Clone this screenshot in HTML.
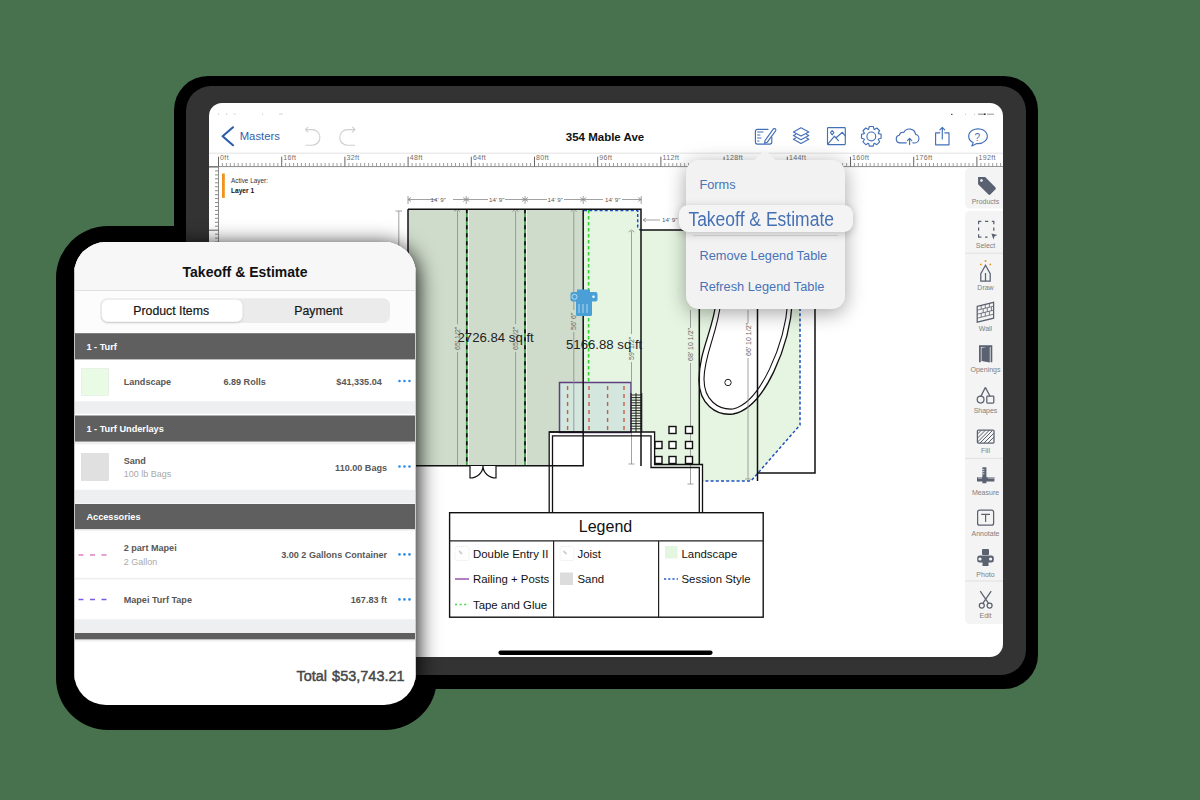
<!DOCTYPE html>
<html><head><meta charset="utf-8">
<style>
*{margin:0;padding:0;box-sizing:border-box}
html,body{width:1200px;height:800px;overflow:hidden;background:#48724e;font-family:"Liberation Sans",sans-serif}
.abs{position:absolute}
#pshadow{left:56px;top:226px;width:381px;height:504px;border-radius:52px;background:#000}
#ishadow{left:174px;top:76px;width:864px;height:613px;border-radius:34px;background:#000}
#bezel{left:186px;top:86px;width:840px;height:589px;border-radius:25px;background:#333}
#screen{left:209px;top:103px;width:794px;height:554px;border-radius:13px;background:#fff;overflow:hidden}
#screen svg{position:absolute;left:0;top:0}
#softclip{left:186px;top:86px;width:840px;height:589px;border-radius:25px;overflow:hidden}
#softcast{left:-112.1px;top:156px;width:341.7px;height:462.5px;border-radius:32px;box-shadow:1px 4.5px 22px 0 rgba(0,0,0,1)}
#phone{left:73.9px;top:242px;width:341.7px;height:462.5px;border-radius:32px;background:#fff;overflow:hidden}
#pin{position:absolute;left:-73.9px;top:-242px;width:1200px;height:800px}
#pin div{position:absolute}
.t{position:absolute;white-space:nowrap;line-height:1}
</style></head>
<body>
<div id="pshadow" class="abs"></div>
<div id="ishadow" class="abs"></div>
<div id="bezel" class="abs"></div>
<div id="screen" class="abs">
<svg width="794" height="554" viewBox="209 103 794 554" font-family="Liberation Sans">
<!-- status bar specks -->
<g fill="#bdbdbd"><rect x="218" y="113.6" width="1" height="1"/><rect x="226" y="113.6" width="1.2" height="1"/><rect x="233" y="113.6" width="3" height="1" opacity=".5"/><rect x="262" y="113.6" width="1" height="1"/><rect x="279" y="113.6" width="4" height="1" opacity=".6"/><rect x="951" y="113.8" width="1.5" height="1.2" fill="#555"/><rect x="965" y="113.8" width="1" height="1"/><rect x="974" y="113.8" width="1" height="1"/><rect x="978" y="113.6" width="6" height="1.2" fill="#999"/><rect x="984" y="113.4" width="1.6" height="1.6" fill="#333"/><rect x="987" y="113.6" width="7" height="1.2" fill="#aaa"/></g>
<!-- nav -->
<path d="M233 127.3L222.6 136.3L233 145.2" stroke="#2d5ba9" stroke-width="2.1" fill="none" stroke-linecap="round" stroke-linejoin="round"/>
<text x="239.7" y="140" font-size="11.3" fill="#3560ab">Masters</text>
<g stroke="#cfcfcf" stroke-width="1.1" fill="none">
<path d="M305.5 129.6H312.1A7.85 7.85 0 0 1 312.1 145.3H305.5M308.2 126.9L305.5 129.6L308.2 132.3"/>
<path d="M355 129.6H347.6A7.85 7.85 0 0 0 347.6 145.3H355M352.3 126.9L355 129.6L352.3 132.3"/>
</g>
<text x="565.8" y="140.5" font-size="11.5" font-weight="bold" fill="#111">354 Mable Ave</text>
<!-- toolbar icons -->
<g stroke="#4470b6" stroke-width="1.15" fill="none" stroke-linejoin="round" stroke-linecap="round">
<path d="M768 129.4H757.4A2 2 0 0 0 755.4 131.4V142.1A2 2 0 0 0 757.4 144.1H769.8A2 2 0 0 0 771.8 142.1V137"/>
<path d="M765 140.6L773.2 129.2A1.3 1.3 0 0 1 775.6 130.8L767.3 142.2L764.6 143.3Z"/>
<path d="M757.6 132H763M757.6 135H760M757.6 138H761M757.6 141H759" stroke-width="1"/>
<path d="M793.4 131.9L801 127.8L808.8 131.9L801 136Z"/>
<path d="M795.6 134.4L793.4 135.6L801 139.7L808.8 135.6L806.6 134.4"/>
<path d="M795.6 138.1L793.4 139.3L801 143.4L808.8 139.3L806.6 138.1"/>
<rect x="827.5" y="127.6" width="17.8" height="17" rx="0.8"/>
<path d="M827.8 144.2L834.5 136.2L838.4 140.6M835.8 138L842.4 132.3L845.2 136"/>
<path d="M832.2 130.6L833.9 132.6L832.2 134.8L830.5 132.6Z"/>
<path d="M868.62 129.19L869.31 126.50L873.29 126.50L873.98 129.19L874.44 129.38L876.83 127.97L879.63 130.77L878.22 133.16L878.41 133.62L881.10 134.31L881.10 138.29L878.41 138.98L878.22 139.44L879.63 141.83L876.83 144.63L874.44 143.22L873.98 143.41L873.29 146.10L869.31 146.10L868.62 143.41L868.16 143.22L865.77 144.63L862.97 141.83L864.38 139.44L864.19 138.98L861.50 138.29L861.50 134.31L864.19 133.62L864.38 133.16L862.97 130.77L865.77 127.97L868.16 129.38Z" stroke-linejoin="round"/>
<circle cx="871.3" cy="136.4" r="4.4"/>
<path d="M906.2 142.8H900A3.8 3.8 0 0 1 899.2 135.3A4 4 0 0 1 903.8 132.4A6.3 6.3 0 0 1 915.6 134.4A4.3 4.3 0 0 1 913.6 142.8H912.9"/>
<path d="M909.6 144.6V138.6M907.4 140.6L909.6 138.4L911.8 140.6"/>
<path d="M939.8 132.8H935.6V144.8H949V132.8H944.8"/>
<path d="M942.3 139V127.5M939.9 129.8L942.3 127.4L944.7 129.8"/>
<path d="M973.2 142.6A9.3 7.4 0 1 1 976.8 143.6L971.8 146Z"/>
</g>
<text x="974.6" y="140.6" font-size="10" fill="#4470b6">?</text>
<!-- ruler -->
<path d="M209 153.2H1003" stroke="#e2e2e2" stroke-width="1"/>
<path d="M209 166.6H1003M218.5 166V657" stroke="#8c8c8c" stroke-width="1"/>
<path d="M222.4 163V166.5M226.4 163V166.5M230.3 163V166.5M234.3 163V166.5M238.2 163V166.5M242.2 163V166.5M246.2 163V166.5M250.1 163V166.5M254.1 163V166.5M258.0 163V166.5M261.9 163V166.5M265.9 163V166.5M269.9 163V166.5M273.8 163V166.5M277.8 163V166.5M285.6 163V166.5M289.6 163V166.5M293.6 163V166.5M297.5 163V166.5M301.4 163V166.5M305.4 163V166.5M309.4 163V166.5M313.3 163V166.5M317.2 163V166.5M321.2 163V166.5M325.1 163V166.5M329.1 163V166.5M333.1 163V166.5M337.0 163V166.5M340.9 163V166.5M348.9 163V166.5M352.8 163V166.5M356.8 163V166.5M360.7 163V166.5M364.6 163V166.5M368.6 163V166.5M372.6 163V166.5M376.5 163V166.5M380.5 163V166.5M384.4 163V166.5M388.4 163V166.5M392.3 163V166.5M396.2 163V166.5M400.2 163V166.5M404.1 163V166.5M412.1 163V166.5M416.0 163V166.5M420.0 163V166.5M423.9 163V166.5M427.9 163V166.5M431.8 163V166.5M435.8 163V166.5M439.7 163V166.5M443.6 163V166.5M447.6 163V166.5M451.6 163V166.5M455.5 163V166.5M459.5 163V166.5M463.4 163V166.5M467.4 163V166.5M475.2 163V166.5M479.2 163V166.5M483.2 163V166.5M487.1 163V166.5M491.1 163V166.5M495.0 163V166.5M498.9 163V166.5M502.9 163V166.5M506.9 163V166.5M510.8 163V166.5M514.8 163V166.5M518.7 163V166.5M522.7 163V166.5M526.6 163V166.5M530.5 163V166.5M538.5 163V166.5M542.4 163V166.5M546.4 163V166.5M550.3 163V166.5M554.2 163V166.5M558.2 163V166.5M562.2 163V166.5M566.1 163V166.5M570.0 163V166.5M574.0 163V166.5M578.0 163V166.5M581.9 163V166.5M585.9 163V166.5M589.8 163V166.5M593.8 163V166.5M601.7 163V166.5M605.6 163V166.5M609.5 163V166.5M613.5 163V166.5M617.5 163V166.5M621.4 163V166.5M625.4 163V166.5M629.3 163V166.5M633.2 163V166.5M637.2 163V166.5M641.2 163V166.5M645.1 163V166.5M649.0 163V166.5M653.0 163V166.5M657.0 163V166.5M664.9 163V166.5M668.8 163V166.5M672.8 163V166.5M676.7 163V166.5M680.7 163V166.5M684.6 163V166.5M688.5 163V166.5M692.5 163V166.5M696.5 163V166.5M700.4 163V166.5M704.4 163V166.5M708.3 163V166.5M712.2 163V166.5M716.2 163V166.5M720.2 163V166.5M728.0 163V166.5M732.0 163V166.5M736.0 163V166.5M739.9 163V166.5M743.9 163V166.5M747.8 163V166.5M751.8 163V166.5M755.7 163V166.5M759.6 163V166.5M763.6 163V166.5M767.6 163V166.5M771.5 163V166.5M775.5 163V166.5M779.4 163V166.5M783.4 163V166.5M791.2 163V166.5M795.2 163V166.5M799.1 163V166.5M803.1 163V166.5M807.1 163V166.5M811.0 163V166.5M815.0 163V166.5M818.9 163V166.5M822.9 163V166.5M826.8 163V166.5M830.8 163V166.5M834.7 163V166.5M838.6 163V166.5M842.6 163V166.5M846.6 163V166.5M854.5 163V166.5M858.4 163V166.5M862.4 163V166.5M866.3 163V166.5M870.2 163V166.5M874.2 163V166.5M878.1 163V166.5M882.1 163V166.5M886.1 163V166.5M890.0 163V166.5M894.0 163V166.5M897.9 163V166.5M901.9 163V166.5M905.8 163V166.5M909.8 163V166.5M917.6 163V166.5M921.6 163V166.5M925.6 163V166.5M929.5 163V166.5M933.5 163V166.5M937.4 163V166.5M941.4 163V166.5M945.3 163V166.5M949.2 163V166.5M953.2 163V166.5M957.1 163V166.5M961.1 163V166.5M965.1 163V166.5M969.0 163V166.5M973.0 163V166.5M980.9 163V166.5M984.8 163V166.5M988.8 163V166.5M992.7 163V166.5M996.7 163V166.5M1000.6 163V166.5" stroke="#8f8f8f" stroke-width=".85" fill="none"/><path d="M215 170.9H218.5M215 174.9H218.5M215 178.8H218.5M215 182.8H218.5M215 186.8H218.5M215 190.7H218.5M215 194.7H218.5M215 198.6H218.5M215 202.6H218.5M215 206.5H218.5M215 210.4H218.5M215 214.4H218.5M215 218.3H218.5M215 222.3H218.5M215 226.2H218.5M215 234.2H218.5M215 238.1H218.5M215 242.1H218.5M215 246.0H218.5M215 249.9H218.5M215 253.9H218.5M215 257.9H218.5M215 261.8H218.5M215 265.8H218.5M215 269.7H218.5M215 273.6H218.5M215 277.6H218.5M215 281.6H218.5M215 285.5H218.5M215 289.4H218.5M215 297.4H218.5M215 301.3H218.5M215 305.2H218.5M215 309.2H218.5M215 313.1H218.5M215 317.1H218.5M215 321.1H218.5M215 325.0H218.5M215 329.0H218.5M215 332.9H218.5M215 336.9H218.5M215 340.8H218.5M215 344.8H218.5M215 348.7H218.5M215 352.6H218.5M215 360.6H218.5M215 364.5H218.5M215 368.5H218.5M215 372.4H218.5M215 376.4H218.5M215 380.3H218.5M215 384.2H218.5M215 388.2H218.5M215 392.1H218.5M215 396.1H218.5M215 400.1H218.5M215 404.0H218.5M215 408.0H218.5M215 411.9H218.5M215 415.9H218.5M215 423.8H218.5M215 427.7H218.5M215 431.7H218.5M215 435.6H218.5M215 439.6H218.5M215 443.5H218.5M215 447.4H218.5M215 451.4H218.5M215 455.4H218.5M215 459.3H218.5M215 463.2H218.5M215 467.2H218.5M215 471.2H218.5M215 475.1H218.5M215 479.1H218.5M215 486.9H218.5M215 490.9H218.5M215 494.9H218.5M215 498.8H218.5M215 502.8H218.5M215 506.7H218.5M215 510.7H218.5M215 514.6H218.5M215 518.5H218.5M215 522.5H218.5M215 526.5H218.5M215 530.4H218.5M215 534.4H218.5M215 538.3H218.5M215 542.2H218.5M215 550.2H218.5M215 554.1H218.5M215 558.0H218.5M215 562.0H218.5M215 566.0H218.5M215 569.9H218.5M215 573.9H218.5M215 577.8H218.5M215 581.8H218.5M215 585.7H218.5M215 589.7H218.5M215 593.6H218.5M215 597.5H218.5M215 601.5H218.5M215 605.5H218.5M215 613.4H218.5M215 617.3H218.5M215 621.2H218.5M215 625.2H218.5M215 629.2H218.5M215 633.1H218.5M215 637.0H218.5M215 641.0H218.5M215 645.0H218.5M215 648.9H218.5M215 652.9H218.5M215 656.8H218.5" stroke="#8a8a8a" stroke-width="1" fill="none"/>
<path d="M218.5 156.7V166.5M281.7 156.7V166.5M344.9 156.7V166.5M408.1 156.7V166.5M471.3 156.7V166.5M534.5 156.7V166.5M597.7 156.7V166.5M660.9 156.7V166.5M724.1 156.7V166.5M787.3 156.7V166.5M850.5 156.7V166.5M913.7 156.7V166.5M976.9 156.7V166.5M209 167.0H218.5M209 230.2H218.5M209 293.4H218.5M209 356.6H218.5M209 419.8H218.5M209 483.0H218.5M209 546.2H218.5M209 609.4H218.5" stroke="#666" stroke-width="1" fill="none"/>
<g font-size="7" letter-spacing=".35" fill="#707070"><text x="220.1" y="160.4">0ft</text><text x="283.3" y="160.4">16ft</text><text x="346.5" y="160.4">32ft</text><text x="409.7" y="160.4">48ft</text><text x="472.9" y="160.4">64ft</text><text x="536.1" y="160.4">80ft</text><text x="599.3" y="160.4">96ft</text><text x="662.5" y="160.4">112ft</text><text x="725.7" y="160.4">128ft</text><text x="788.9" y="160.4">144ft</text><text x="852.1" y="160.4">160ft</text><text x="915.3" y="160.4">176ft</text><text x="978.5" y="160.4">192ft</text></g>

<!-- active layer -->
<rect x="222" y="173.5" width="2.8" height="24.4" fill="#f0931c"/>
<text x="231" y="183" font-size="6.4" fill="#333">Active Layer:</text>
<text x="231" y="192.8" font-size="6.6" font-weight="bold" fill="#111">Layer 1</text>
<!-- fills -->
<path d="M408 209.3H583.2V432H549.2V465.7H408Z" fill="#cfdccb"/>
<path d="M583.2 209.3H641V230H800V425L751 481H702V466H654.6V432H583.2Z" fill="#e6f5e2"/>
<rect x="559.5" y="382.5" width="71.5" height="50" fill="#d3e7de" stroke="#5e3d80" stroke-width="1.5"/>
<!-- tub -->
<path d="M716.5 300C713 330 699 352 699 380C699 404 716 416 733 414C765 408 790 345 792.5 300Z" fill="#fff" stroke="#111" stroke-width="1.3"/>
<path d="M721 300C718 333 704 354 704 379C704 400 718 410 733 409C760 403 785 345 788 300" fill="none" stroke="#111" stroke-width="1.1"/>
<circle cx="728" cy="382.5" r="3.2" fill="#fff" stroke="#222" stroke-width="1"/>
<!-- gray dims -->
<g stroke="#8a8a8a" stroke-width=".8" fill="none">
<path d="M408 199.5H436M453 199.5H466.2M466.3 199.5H488M505 199.5H525M525 199.5H547M564 199.5H583.2M583.2 199.5H603M622 199.5H641.2"/>
<path d="M408 196V204M466.2 196V204M525 196V204M583.2 196V204M641.2 196V204"/>
<path d="M411 197.5L408 199.5L411 201.5M463.2 197.5L466.2 199.5L463.2 201.5M469.2 197.5L466.2 199.5L469.2 201.5M522 197.5L525 199.5L522 201.5M528 197.5L525 199.5L528 201.5M580.2 197.5L583.2 199.5L580.2 201.5M586.2 197.5L583.2 199.5L586.2 201.5M638.2 197.5L641.2 199.5L638.2 201.5"/>
<path d="M398.8 211V466M457.5 211V324M457.5 352V465M515.6 211V324M515.6 352V465M573.8 211V310M573.8 332V432M631.5 231V334M631.5 362V464M690.5 310V328M690.5 363V484M748 310V323M748 358V479"/>
<path d="M395.5 211H402M454 211.5L457 209.5L460 211.5M512.5 211.5L515.5 209.5L518.5 211.5M570.8 211.5L573.8 209.5L576.8 211.5M628.5 232L631.5 230L634.5 232M628.5 464H634.5M687.5 484H693.5M745 479H751"/>
<path d="M643 220H660M646 218L643 220L646 222"/>
</g>
<g font-size="6.2" fill="#555">
<text x="430.5" y="201.7">14' 9"</text><text x="489" y="201.7">14' 9"</text><text x="547.5" y="201.7">14' 9"</text><text x="605" y="201.7">14' 9"</text>
<text x="662" y="222.2">14' 9"</text>
</g>
<g font-size="7" fill="#666">
<text transform="translate(459.8 350) rotate(-90)">65' 1/2"</text>
<text transform="translate(518 350) rotate(-90)">65' 1/2"</text>
<text transform="translate(576.3 330) rotate(-90)">56' 6"</text>
<text transform="translate(634 360) rotate(-90)">59' 1/2"</text>
<text transform="translate(693 361) rotate(-90)">68' 10 1/2"</text>
<text transform="translate(750.5 356) rotate(-90)">66' 10 1/2"</text>
</g>
<!-- dashed lines -->
<path d="M468.3 209.3V465.7M526.5 209.3V465.7" stroke="#fff" stroke-width="1" opacity=".8"/>
<path d="M466.8 209.3V465.7M525 209.3V465.7" stroke="#3a9a3a" stroke-width="1.7"/>
<path d="M466.8 209.3V465.7M525 209.3V465.7" stroke="#111" stroke-width="1.7" stroke-dasharray="4 4"/>
<path d="M588.6 210V382" stroke="#35d335" stroke-width="1.6" stroke-dasharray="3.5 2.5"/>
<path d="M567.6 386V431M589 386V431M607.6 386V431M624 386V431" stroke="#c95a48" stroke-width="1.4" stroke-dasharray="4 4"/>
<path d="M584 210.6H637.7V226A3.5 3.5 0 0 0 641 230" stroke="#1f4fc0" stroke-width="1.5" stroke-dasharray="3 2.2" fill="none"/>
<path d="M800 308V425L751 481H702" stroke="#1f4fc0" stroke-width="1.5" stroke-dasharray="3 2.2" fill="none"/>
<!-- black walls -->
<g stroke="#111" stroke-width="1.5" fill="none">
<path d="M408 209.3H641V466M408 209.3V465.7H583.2V209.3"/>
<path d="M641 230H815V473H757.5V481M699.3 300V464.5M757.5 300V473"/>
<path d="M549.2 512.5V432H654.6V464.5H702.5V512.5M552.5 512.5V435.8H651V467.5H699.3V512.5" stroke-width="1.3"/>
<path d="M549.2 432H583.2"/>
</g>
<!-- door -->
<path d="M470 466V478A13 12 0 0 0 483 466M496 466V478A13 12 0 0 1 483 466" stroke="#111" stroke-width="1.2" fill="#fff"/>
<!-- stairs -->
<g stroke="#111" stroke-width=".9">
<path d="M631 393V432M636 393V432M641.8 393V432"/>
<path d="M631 395H641.8M631 397.6H641.8M631 400.2H641.8M631 402.8H641.8M631 405.4H641.8M631 408H641.8M631 410.6H641.8M631 413.2H641.8M631 415.8H641.8M631 418.4H641.8M631 421H641.8M631 423.6H641.8M631 426.2H641.8M631 428.8H641.8"/>
</g>
<!-- squares -->
<g fill="#fff" stroke="#111" stroke-width="1.4">
<rect x="669" y="426.5" width="7" height="7"/><rect x="685.5" y="426.5" width="7" height="7"/>
<rect x="655" y="441.5" width="7" height="7"/><rect x="669" y="441.5" width="7" height="7"/><rect x="685.5" y="441.5" width="7" height="7"/>
<rect x="655" y="456.5" width="7" height="7"/><rect x="669" y="456.5" width="7" height="7"/><rect x="685.5" y="456.5" width="7" height="7"/>
</g>
<!-- area labels -->
<g font-size="13.2" fill="#222">
<text x="457.5" y="341.8">2726.84 sq ft</text>
<text x="566" y="349.4">5166.88 sq ft</text>
</g>
<!-- device icon -->
<g fill="#4aa0d6">
<rect x="570.5" y="292" width="27" height="9.5" rx="2"/>
<rect x="577" y="289.5" width="13" height="4"/>
<rect x="576" y="300" width="16" height="16" rx="1.5"/>
</g>
<g fill="none" stroke="#cfe6f4" stroke-width=".8"><circle cx="574.5" cy="296.8" r="2.5"/><path d="M579 304V313M583 304V313M587 304V313"/></g>
<circle cx="593.5" cy="296.8" r="1.2" fill="#fff"/>
<!-- legend -->
<rect x="449.6" y="512.7" width="313.6" height="104.5" fill="#fff" stroke="#111" stroke-width="1.4"/>
<path d="M449.6 540.8H763.2M553.6 540.8V617.2M658.6 540.8V617.2" stroke="#222" stroke-width="1.2"/>
<text x="578.8" y="532" font-size="16" fill="#111">Legend</text>
<g font-size="11.4" fill="#111">
<text x="473" y="558">Double Entry II</text>
<text x="473" y="583.4">Railing + Posts</text>
<text x="473" y="608.7">Tape and Glue</text>
<text x="577.5" y="558">Joist</text>
<text x="577.5" y="583.4">Sand</text>
<text x="681.5" y="558">Landscape</text>
<text x="681.5" y="583.4">Session Style</text>
</g>
<g fill="none" stroke="#e2e2e2" stroke-width=".8" stroke-dasharray="1 1"><rect x="455" y="546.5" width="14" height="14" rx="2"/><rect x="560" y="546.5" width="14" height="14" rx="2"/></g>
<path d="M459 551l3 3 M563.5 551l3 3" stroke="#d0d0d0" stroke-width="1.8"/>
<path d="M455 579H469" stroke="#8a3aa0" stroke-width="1.3"/>
<path d="M455 604.5H469" stroke="#45d845" stroke-width="1.4" stroke-dasharray="2 2.6"/>
<rect x="560" y="572.5" width="13" height="12.5" fill="#dcdcdc"/>
<rect x="665" y="546" width="12.5" height="12.5" fill="#e3f6df"/>
<path d="M664 579H678" stroke="#2a5ec8" stroke-width="1.3" stroke-dasharray="2.2 2"/>

<!-- tool palette -->
<rect x="965" y="168" width="44" height="40.6" rx="5" fill="#f4f4f4"/>
<rect x="965" y="210.7" width="44" height="413.3" rx="5" fill="#f4f4f4"/>
<path d="M965 253.2H1003M965 458.4H1003M965 581H1003" stroke="#e0e0e0" stroke-width="1"/>
<g font-size="7" fill="#808080" text-anchor="middle">
<text x="985.5" y="204.2">Products</text>
<text x="985.5" y="248">Select</text>
<text x="985.5" y="290.2">Draw</text>
<text x="985.5" y="330.5">Wall</text>
<text x="985.5" y="372.3">Openings</text>
<text x="985.5" y="413">Shapes</text>
<text x="985.5" y="453.3">Fill</text>
<text x="985.5" y="495">Measure</text>
<text x="985.5" y="536">Annotate</text>
<text x="985.5" y="577">Photo</text>
<text x="985.5" y="618.2">Edit</text>
</g>
<g fill="#5a6170" stroke="none">
<!-- products tag -->
<g transform="translate(986 185) rotate(45)"><path d="M-11.2 0L-6.2 -5H8.2A1.6 1.6 0 0 1 9.8 -3.4V3.4A1.6 1.6 0 0 1 8.2 5H-6.2Z"/><circle cx="-6.4" cy="0" r="1.3" fill="#f4f4f4"/></g>
<!-- openings door -->
<path d="M979 345.2H992.3V362.2H990.6V347H980.8V362.2H979Z"/>
<path d="M981.5 347.8L989.8 346.4V362.4L981.5 361Z"/>
<!-- measure -->
<path d="M982.4 467.2H986.4V477.2H994.4V481.4H986.4V483.2H982.4V481.4H977V477.2H982.4Z"/>
<!-- photo -->
<rect x="982" y="549" width="7" height="6" rx="1"/>
<rect x="977.2" y="555.5" width="16.6" height="7" rx="2.5"/>
<rect x="982.5" y="562" width="6" height="4"/>
</g>
<g fill="none" stroke="#5a6170" stroke-width="1.25">
<!-- select -->
<path d="M978.6 224.2V221.4H981.4M985 221.4H988.3M991.8 221.4H993.8V224.2M993.8 227.6V230.8M978.6 227.6V230.8M978.6 234.2V237H981.4M985 237H987.6"/>
<!-- draw nib -->
<path d="M985.5 265.2L980.8 273.6V281H990.2V273.6Z M985.5 273V281"/>
<!-- wall -->
<path d="M977.2 306.4L993.6 302.4V318.2L977.2 322.2Z"/>
<path d="M977.2 310.2L993.6 306.2M977.2 314.2L993.6 310.2M977.2 318.2L993.6 314.2M981.2 305.4V309.2M985.3 304.4V308.2M989.4 303.4V307.2M983.2 308.9V313M987.3 307.9V312M991.4 306.9V311M981.2 313.2V317.2M985.3 312.2V316.2M989.4 311.2V315.2" stroke-width=".8"/>
<!-- shapes -->
<path d="M985.4 387.4L980.7 396.6M985.4 387.4L990 396.2"/>
<circle cx="980.6" cy="399.6" r="3.4"/>
<rect x="986.8" y="396.2" width="7" height="6.8" rx=".8"/>
<!-- fill -->
<rect x="977.4" y="430" width="16.6" height="13" rx="1"/>
<path d="M977.6 434L981.4 430.2M977.6 438L985.4 430.2M977.6 442L989.4 430.2M980 443L992 431M984 443L993.8 433.2M988 443L993.8 437.2" stroke-width="1"/>
<!-- annotate -->
<rect x="977.6" y="510.2" width="16" height="15" rx="2"/>
<path d="M981.2 514.4H990M985.6 514.4V522" stroke-width="1.2"/>
<!-- scissors -->
<path d="M980.2 591.2L988.4 603.2M991.2 591.2L983 603.2"/>
<circle cx="981.8" cy="605.6" r="2.5"/><circle cx="989.6" cy="605.6" r="2.5"/>
</g>
<path d="M991.4 233.4L993.4 239.4L994.6 236.2L997.4 235Z" fill="#5a6170"/>
<g fill="#f0931c"><circle cx="985.5" cy="261" r="1"/><circle cx="980.8" cy="264.4" r=".9"/><circle cx="990.2" cy="264.4" r=".9"/></g>
<g fill="#f4f4f4"><circle cx="980" cy="559" r="1.6"/><circle cx="990.6" cy="559" r="1.6"/></g>
<g stroke="#5a6170" stroke-width=".8" fill="none"><path d="M982.4 469.4H984.4M982.4 471.6H984.4M982.4 473.8H984.4M979 477.2V479M981 477.2V479M989 477.2V479M991 477.2V479M993 477.2V479" stroke="#f4f4f4"/></g>

<!-- home indicator -->
<rect x="498.4" y="650.6" width="214.2" height="4.3" rx="2.15" fill="#000"/>
</svg>
<div id="sin" style="position:absolute;left:-209px;top:-103px;width:1200px;height:800px">
<div style="position:absolute;left:686.25px;top:160.3px;width:158.7px;height:148.3px;border-radius:13px;background:#f2f2f2;box-shadow:0 4px 20px rgba(0,0,0,.36)"></div>
<svg style="position:absolute;left:750px;top:148px" width="30" height="16" viewBox="750 148 30 16"><path d="M753 161.5L763.3 151.3Q765 149.8 766.7 151.3L777 161.5Z" fill="#f2f2f2"/></svg>
<div class="t" style="left:699.4px;top:179.3px;font-size:12.8px;color:#4a72b6">Forms</div>
<div style="position:absolute;left:692.8px;top:234.6px;width:145.5px;height:1.6px;background:#d6d6d6"></div>
<div class="t" style="left:699.4px;top:250.4px;font-size:12.8px;color:#4a72b6">Remove Legend Table</div>
<div class="t" style="left:699.4px;top:281px;font-size:12.8px;color:#4a72b6">Refresh Legend Table</div>
<div style="position:absolute;left:679.25px;top:205.2px;width:173.75px;height:26.8px;border-radius:9px;background:#f4f4f4;box-shadow:0 2px 9px rgba(0,0,0,.22)"></div>
<div class="t" style="left:688.4px;top:211.8px;font-size:17.5px;color:#4670b4;transform:scaleY(1.12);transform-origin:0 13.6px">Takeoff &amp; Estimate</div>

</div>
</div>
<div id="softclip" class="abs"><div id="softcast" class="abs"></div></div>
<div id="phone" class="abs"><div id="pin">
<svg style="position:absolute;left:73.9px;top:242px" width="341.7" height="462.5" viewBox="73.9 242 341.7 462.5" font-family="Liberation Sans">
<defs><filter id="segsh" x="-10%" y="-30%" width="120%" height="160%"><feDropShadow dx="0" dy="1" stdDeviation="1" flood-color="#000" flood-opacity=".18"/></filter></defs>
<rect x="73.9" y="242" width="341.7" height="48.2" fill="#f7f7f7"/>
<rect x="73.9" y="290.2" width="341.7" height="1" fill="#d9d9d9"/>
<rect x="73.9" y="291.2" width="341.7" height="42" fill="#fcfcfc"/>
<rect x="100.3" y="298.3" width="289.6" height="24.8" rx="7" fill="#ebebeb"/>
<rect x="101.7" y="299.8" width="140.6" height="21.9" rx="6" fill="#fff" filter="url(#segsh)"/>
<g font-size="12.3" fill="#151515" stroke="#151515" stroke-width=".2">
<text x="133.2" y="315.3">Product Items</text>
<text x="294.2" y="315.3">Payment</text>
</g>
<text x="182.5" y="277.3" font-size="14" font-weight="bold" fill="#111">Takeoff &amp; Estimate</text>
<!-- section bars -->
<g fill="#5f5f5f">
<rect x="73.9" y="333.2" width="341.7" height="26.2"/>
<rect x="73.9" y="415.5" width="341.7" height="26.25"/>
<rect x="73.9" y="504" width="341.7" height="25.3"/>
<rect x="73.9" y="632.9" width="341.7" height="6.7"/>
</g>
<g fill="#eeeff1">
<rect x="73.9" y="401.25" width="341.7" height="12.6"/>
<rect x="73.9" y="441.75" width="341.7" height="2.5"/>
<rect x="73.9" y="489.8" width="341.7" height="13.7"/>
<rect x="73.9" y="529.3" width="341.7" height="1.5"/>
<rect x="73.9" y="577.75" width="341.7" height="1.75"/>
<rect x="73.9" y="619.2" width="341.7" height="13.7"/>
<rect x="73.9" y="639.6" width="341.7" height="1.9"/>
</g>
<g font-size="9.2" font-weight="bold" fill="#fff">
<text x="86.3" y="349.8">1 - Turf</text>
<text x="86.3" y="432.4">1 - Turf Underlays</text>
<text x="86.3" y="520">Accessories</text>
</g>
<rect x="81.3" y="368.4" width="27" height="27" fill="#e9fae5" stroke="#e1ebdd" stroke-width=".6"/>
<rect x="81.3" y="453.5" width="27" height="27" fill="#e0e0e0" stroke="#d6d6d6" stroke-width=".6"/>
<g font-size="9.1" font-weight="bold" fill="#575757">
<text x="123.6" y="384.8">Landscape</text>
<text x="223.3" y="384.8">6.89 Rolls</text>
<text x="381.7" y="384.8" text-anchor="end">$41,335.04</text>
<text x="123.6" y="464.4">Sand</text>
<text x="387" y="470.8" text-anchor="end">110.00 Bags</text>
<text x="123.6" y="551.5">2 part Mapei</text>
<text x="387" y="558" text-anchor="end">3.00 2 Gallons Container</text>
<text x="123.6" y="603">Mapei Turf Tape</text>
<text x="387" y="603" text-anchor="end">167.83 ft</text>
</g>
<g font-size="9" fill="#a9a9a9">
<text x="123.6" y="477.5">100 lb Bags</text>
<text x="123.6" y="565.2">2 Gallon</text>
</g>
<g fill="#2f8ae8">
<circle cx="399.4" cy="381" r="1.3"/><circle cx="404.4" cy="381" r="1.3"/><circle cx="409.4" cy="381" r="1.3"/>
<circle cx="399.4" cy="466.5" r="1.3"/><circle cx="404.4" cy="466.5" r="1.3"/><circle cx="409.4" cy="466.5" r="1.3"/>
<circle cx="399.4" cy="554.4" r="1.3"/><circle cx="404.4" cy="554.4" r="1.3"/><circle cx="409.4" cy="554.4" r="1.3"/>
<circle cx="399.4" cy="599.4" r="1.3"/><circle cx="404.4" cy="599.4" r="1.3"/><circle cx="409.4" cy="599.4" r="1.3"/>
</g>
<path d="M78.4 555H107.5" stroke="#e07fc3" stroke-width="1.5" stroke-dasharray="5 6.5"/>
<path d="M78.4 599.6H107.5" stroke="#7b5ce6" stroke-width="1.5" stroke-dasharray="5 6.5"/>
<g fill="#474747" font-size="14.5" stroke="#474747" stroke-width=".45">
<text x="404.5" y="681" text-anchor="end">Total <tspan dx="1">$53,743.21</tspan></text>
</g>
</svg>

</div><div style="position:absolute;left:0;top:0;width:1px;height:462.5px;background:#c4c4c4"></div><div style="position:absolute;left:340.7px;top:0;width:1px;height:462.5px;background:#cdcdcd"></div></div>
</body></html>
